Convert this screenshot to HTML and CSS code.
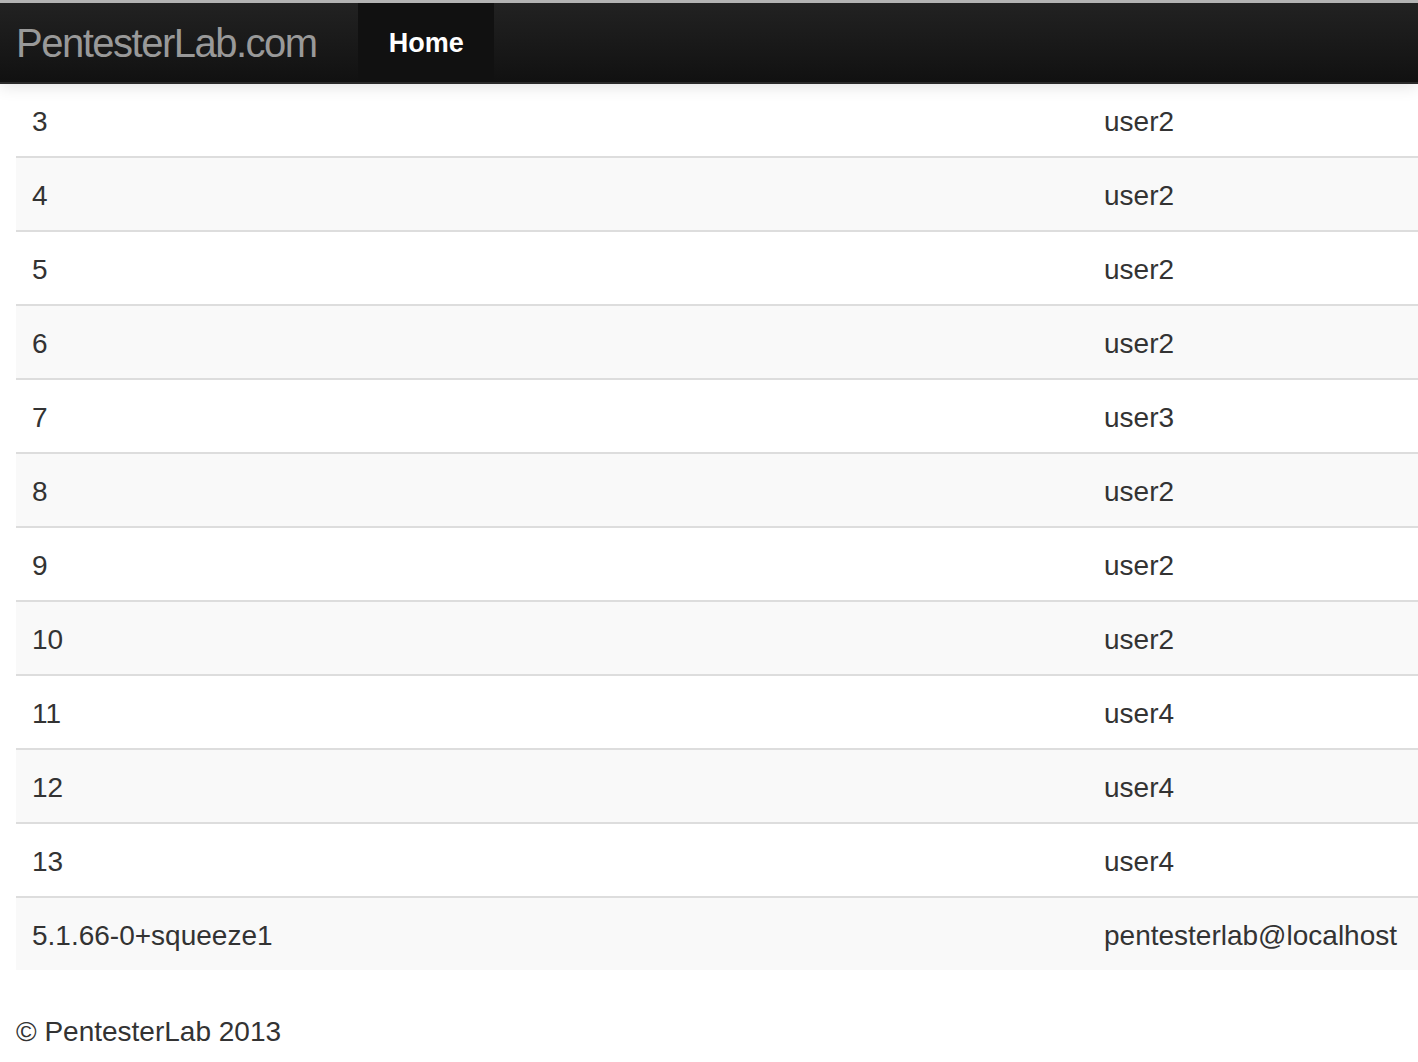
FILE: index.html
```html
<!DOCTYPE html>
<html>
<head>
<meta charset="utf-8">
<link rel="stylesheet" href="styles.css">
</head>
<body>
<div class="navbar">
  <div class="navbar-inner">
    <a class="brand">PentesterLab.com</a>
    <ul class="nav">
      <li class="active"><a>Home</a></li>
    </ul>
  </div>
</div>
<div class="container">
  <table class="table">
    <tbody>
      <tr><td class="c1">3</td><td>user2</td></tr>
      <tr><td class="c1">4</td><td>user2</td></tr>
      <tr><td class="c1">5</td><td>user2</td></tr>
      <tr><td class="c1">6</td><td>user2</td></tr>
      <tr><td class="c1">7</td><td>user3</td></tr>
      <tr><td class="c1">8</td><td>user2</td></tr>
      <tr><td class="c1">9</td><td>user2</td></tr>
      <tr><td class="c1">10</td><td>user2</td></tr>
      <tr><td class="c1">11</td><td>user4</td></tr>
      <tr><td class="c1">12</td><td>user4</td></tr>
      <tr><td class="c1">13</td><td>user4</td></tr>
      <tr><td class="c1">5.1.66-0+squeeze1</td><td>pentesterlab@localhost</td></tr>
    </tbody>
  </table>
  <footer class="footer">© PentesterLab 2013</footer>
</div>
</body>
</html>
```
FILE: styles.css
```css
html, body {
  margin: 0;
  padding: 0;
}
body {
  font-family: "Liberation Sans", Arial, sans-serif;
  font-size: 28px;
  line-height: 40px;
  color: #333;
  background: #fff;
  overflow: hidden;
}
.navbar {
  position: relative;
  z-index: 2;
  box-shadow: 0 2px 16px rgba(0, 0, 0, 0.12);
}
.navbar-inner {
  display: flex;
  align-items: stretch;
  height: 79px;
  border-top: 3px solid #b3b3b3;
  border-bottom: 2px solid #2a2a2a;
  background: linear-gradient(to bottom, #222222, #111111);
}
.brand {
  display: block;
  padding: 1px 41px 0 16px;
  font-size: 40px;
  font-weight: 300;
  letter-spacing: -1.5px;
  color: #999;
  line-height: 78px;
}
.nav {
  display: flex;
  list-style: none;
  margin: 0;
  padding: 0;
}
.nav li a {
  display: block;
  padding: 2px 30px 0 31px;
  line-height: 77px;
  font-size: 27px;
  font-weight: bold;
  color: #fff;
}
.nav li.active {
  background: #111;
}
.container {
  padding-left: 16px;
}
.table {
  width: 1402px;
  border-collapse: collapse;
  border-spacing: 0;
  table-layout: fixed;
}
.table td {
  padding: 18px 16px 14px;
  line-height: 40px;
  border-top: 2px solid #ddd;
  text-align: left;
  vertical-align: top;
  white-space: nowrap;
}
.table tr:first-child td {
  border-top: 0;
}
.table td.c1 {
  width: 1040px;
}
.table tr:nth-child(even) td {
  background: #f9f9f9;
}
.footer {
  padding-top: 42px;
  line-height: 40px;
}
```
